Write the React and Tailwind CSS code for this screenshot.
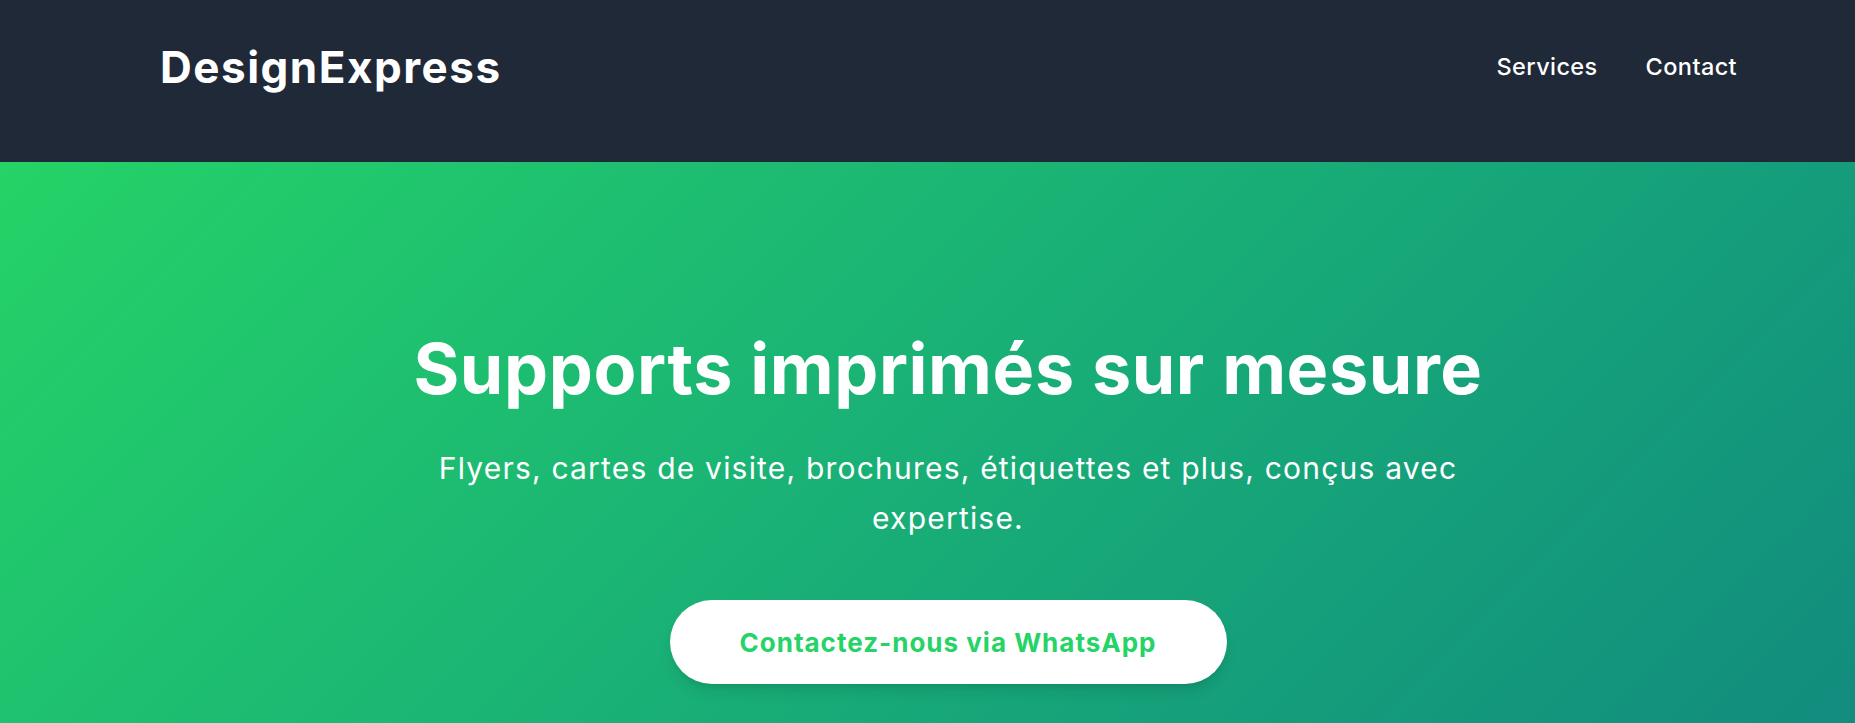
import React from 'react';

const font = { fontFamily: 'Inter, "Noto Sans", sans-serif' };

const Header = () => (
  <header className="h-[162px] bg-[#1f2937] flex items-start justify-between pt-[38px] pl-[160px] pr-[118px]">
    <a href="#" className="text-[44px] leading-[58px] font-bold text-white tracking-[1.5px]">
      DesignExpress
    </a>
    <nav className="flex items-center gap-[48px] h-[58px] text-[23.5px] font-medium text-white tracking-[0.4px]">
      <a href="#services">Services</a>
      <a href="#contact">Contact</a>
    </nav>
  </header>
);

const Hero = () => (
  <section className="h-[561px] bg-linear-135 from-[#25d366] to-[#128c7e] flex flex-col items-center pt-[167px] pl-[41px] text-center text-white">
    <h1 className="text-[70px] font-bold leading-[80px] tracking-[0.6px]">
      Supports imprimés sur mesure
    </h1>
    <p className="mt-[34px] max-w-[1090px] text-[30px] leading-[50px] tracking-[1.2px]">
      Flyers, cartes de visite, brochures, étiquettes et plus, conçus avec expertise.
    </p>
    <a
      href="#contact"
      className="mt-[57px] w-[557px] h-[84px] shrink-0 rounded-full bg-white flex items-center justify-center text-[26px] font-bold text-[#25d366] tracking-[1px] shadow-lg"
    >
      Contactez-nous via WhatsApp
    </a>
  </section>
);

export default function App() {
  return (
    <div style={font} className="min-h-screen overflow-hidden">
      <Header />
      <Hero />
    </div>
  );
}
